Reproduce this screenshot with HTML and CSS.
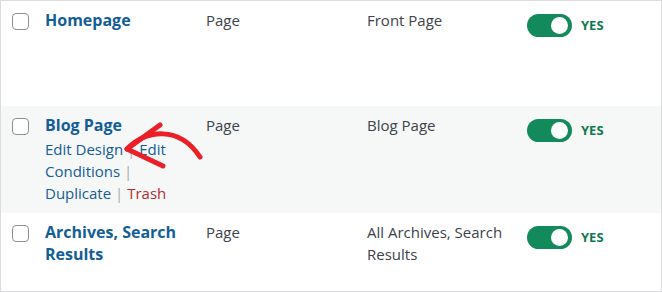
FILE: index.html
```html
<!DOCTYPE html>
<html lang="en">
<head>
<meta charset="utf-8">
<title>Templates</title>
<link rel="stylesheet" href="styles.css">
</head>
<body>
<div class="table">
  <div class="row">
    <div class="cell check"><span class="checkbox"></span></div>
    <div class="cell title"><a class="row-title" href="#">Homepage</a></div>
    <div class="cell type">Page</div>
    <div class="cell cond">Front Page</div>
    <div class="cell status"><span class="toggle"><span class="knob"></span></span><span class="yes">YES</span></div>
  </div>
  <div class="row alt">
    <div class="cell check"><span class="checkbox"></span></div>
    <div class="cell title">
      <a class="row-title" href="#">Blog Page</a>
      <div class="actions"><a href="#">Edit Design</a> <span class="sep">|</span> <a href="#">Edit Conditions</a> <span class="sep">|</span> <a href="#">Duplicate</a> <span class="sep">|</span> <a class="trash" href="#">Trash</a></div>
    </div>
    <div class="cell type">Page</div>
    <div class="cell cond">Blog Page</div>
    <div class="cell status"><span class="toggle"><span class="knob"></span></span><span class="yes">YES</span></div>
  </div>
  <div class="row last">
    <div class="cell check"><span class="checkbox"></span></div>
    <div class="cell title"><a class="row-title" href="#">Archives, Search Results</a></div>
    <div class="cell type">Page</div>
    <div class="cell cond">All Archives, Search Results</div>
    <div class="cell status"><span class="toggle"><span class="knob"></span></span><span class="yes">YES</span></div>
  </div>
  <svg class="arrow" viewBox="0 0 662 292" width="662" height="292" aria-hidden="true">
    <path d="M127 149 C 146 130, 179 125, 200 157" fill="none" stroke="#ea1f27" stroke-width="5" stroke-linecap="round"/>
    <path d="M160 125 L127 149 L163 166" fill="none" stroke="#ea1f27" stroke-width="5" stroke-linecap="round" stroke-linejoin="round"/>
  </svg>
</div>
</body>
</html>
```
FILE: styles.css
```css
html, body {
  margin: 0;
  padding: 0;
  background: #fff;
}
body {
  font-family: "Open Sans", "Noto Sans", sans-serif;
  color: #3c434a;
}
.table {
  position: relative;
  box-sizing: border-box;
  width: 662px;
  height: 292px;
  border: 1px solid #dcdcde;
  display: flex;
  flex-direction: column;
  background: #fff;
}
.row {
  display: grid;
  grid-template-columns: 44px 161px 161px 160px 1fr;
  min-height: 105px;
}
.row.alt {
  background: #f6f7f7;
  min-height: 107px;
}
.row.last {
  flex: 1;
  min-height: 0;
}
.cell {
  padding-top: 8px;
  font-size: 15px;
  line-height: 22px;
}
.check {
  padding-top: 12px;
  padding-left: 11px;
}
.checkbox {
  display: block;
  width: 17px;
  height: 17px;
  box-sizing: border-box;
  border: 1px solid #8c8f94;
  border-radius: 4px;
  background: #fff;
}
.title {
  padding-right: 16px;
}
.row-title {
  font-size: 16px;
  font-weight: 700;
  color: #135e96;
  text-decoration: none;
}
.actions {
  margin-top: 2px;
  font-size: 15px;
  line-height: 22px;
}
.actions a {
  color: #135e96;
  font-weight: 500;
  text-decoration: none;
}
.actions a.trash {
  color: #b32d2e;
}
.sep {
  color: #a7aaad;
}
.type, .cond {
  padding-right: 10px;
}
.status {
  padding-top: 13px;
  display: flex;
  align-items: flex-start;
}
.toggle {
  position: relative;
  display: block;
  width: 45px;
  height: 23px;
  border-radius: 12px;
  background: #138a5b;
  flex: none;
}
.knob {
  position: absolute;
  top: 3px;
  right: 4px;
  width: 17px;
  height: 17px;
  border-radius: 50%;
  background: #fff;
}
.yes {
  margin-left: 9px;
  font-size: 13px;
  font-weight: 700;
  line-height: 23px;
  color: #0f7a4f;
}
.arrow {
  position: absolute;
  left: -1px;
  top: -1px;
  pointer-events: none;
}
```
